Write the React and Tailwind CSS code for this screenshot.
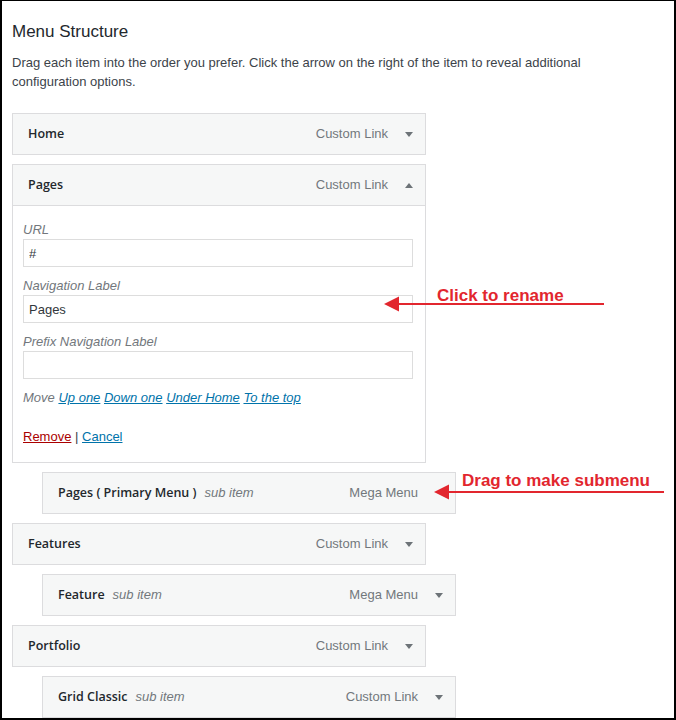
import React from 'react'

/* WP "Menu Structure" panel with two red annotations laid over it. */

const FONT = { fontFamily: '"Liberation Sans", Arial, sans-serif' }
const TITLE_FONT = { fontFamily: '"Open Sans", "Noto Sans", sans-serif' }

function Caret({ up = false }) {
  return (
    <svg width="8" height="5" viewBox="0 0 8 5" className="shrink-0 fill-[#6d7378]">
      {up ? <path d="M0 5h8L4 0z" /> : <path d="M0 0h8L4 5z" />}
    </svg>
  )
}

function ItemBar({ title, sub, type, up = false, caret = true, indent = false, open = false }) {
  return (
    <div
      className={`h-[42px] w-[414px] flex items-center border border-[#dcdcde] bg-[#f6f7f7] pl-[15px] pr-[12px]
                  ${indent ? 'ml-[30px]' : ''} ${open ? '' : 'mb-[9px]'}`}
    >
      <span className="text-[12.5px] font-semibold text-[#23282d]" style={TITLE_FONT}>{title}</span>
      {sub && <span className="ml-[8px] text-[13px] italic text-[#72777c]">sub item</span>}
      <span className="ml-auto text-[13px] text-[#72777c]">{type}</span>
      <span className="w-[8px] ml-[17px] flex">{caret && <Caret up={up} />}</span>
    </div>
  )
}

function Field({ label, value = '' }) {
  return (
    <div>
      <p className="text-[13px] leading-[18px] italic text-[#72777c]">{label}</p>
      <input
        readOnly
        defaultValue={value}
        className="block w-[390px] h-[28px] border border-[#dddddd] bg-white px-[5px] text-[13px] text-[#32373c] outline-none"
        style={FONT}
      />
    </div>
  )
}

function RedArrow({ length }) {
  return (
    <svg width={length} height="16" viewBox={`0 0 ${length} 16`} className="block">
      <path d="M0 8L15 0.5V15.5z" fill="#e2262e" />
      <rect x="14" y="7" width={length - 14} height="2" fill="#e2262e" />
    </svg>
  )
}

export default function App() {
  return (
    <div
      className="relative w-[676px] h-[720px] overflow-hidden bg-white border-black border-t border-l-2 border-r-2 border-b-2"
      style={FONT}
    >
      <div className="pl-[10px] pt-[19px]">
        <h3 className="text-[17px] leading-[23px] text-[#23282d]">Menu Structure</h3>
        <p className="mt-[10px] text-[13px] leading-[19px] text-[#3c434a]">
          Drag each item into the order you prefer. Click the arrow on the right of the item to reveal additional
          <br />
          configuration options.
        </p>

        <ul className="mt-[22px]">
          <li><ItemBar title="Home" type="Custom Link" /></li>

          <li className="mb-[9px]">
            <ItemBar title="Pages" type="Custom Link" up open />
            <div className="w-[414px] border border-t-0 border-[#dcdcde] bg-white px-[10px] pt-[15px] pb-[16px]">
              <Field label="URL" value="#" />
              <div className="mt-[10px]"><Field label="Navigation Label" value="Pages" /></div>
              <div className="mt-[10px]"><Field label="Prefix Navigation Label" /></div>
              <p className="mt-[10px] text-[13px] leading-[18px] italic text-[#72777c]">
                Move{' '}
                <a className="text-[#0073aa] underline">Up one</a>{' '}
                <a className="text-[#0073aa] underline">Down one</a>{' '}
                <a className="text-[#0073aa] underline">Under Home</a>{' '}
                <a className="text-[#0073aa] underline">To the top</a>
              </p>
              <p className="mt-[21px] text-[13px] leading-[18px] text-[#3c434a]">
                <a className="text-[#a00] underline">Remove</a> | <a className="text-[#0073aa] underline">Cancel</a>
              </p>
            </div>
          </li>

          <li><ItemBar title="Pages ( Primary Menu )" sub type="Mega Menu" indent caret={false} /></li>
          <li><ItemBar title="Features" type="Custom Link" /></li>
          <li><ItemBar title="Feature" sub type="Mega Menu" indent /></li>
          <li><ItemBar title="Portfolio" type="Custom Link" /></li>
          <li><ItemBar title="Grid Classic" sub type="Custom Link" indent /></li>
        </ul>
      </div>

      {/* annotations */}
      <span className="absolute left-[435px] top-[285px] text-[17px] leading-[20px] font-bold text-[#e2262e]">
        Click to rename
      </span>
      <div className="absolute left-[382px] top-[295px]"><RedArrow length={220} /></div>

      <span className="absolute left-[460px] top-[470px] text-[17px] leading-[20px] font-bold text-[#e2262e]">
        Drag to make submenu
      </span>
      <div className="absolute left-[432px] top-[483px]"><RedArrow length={230} /></div>
    </div>
  )
}
